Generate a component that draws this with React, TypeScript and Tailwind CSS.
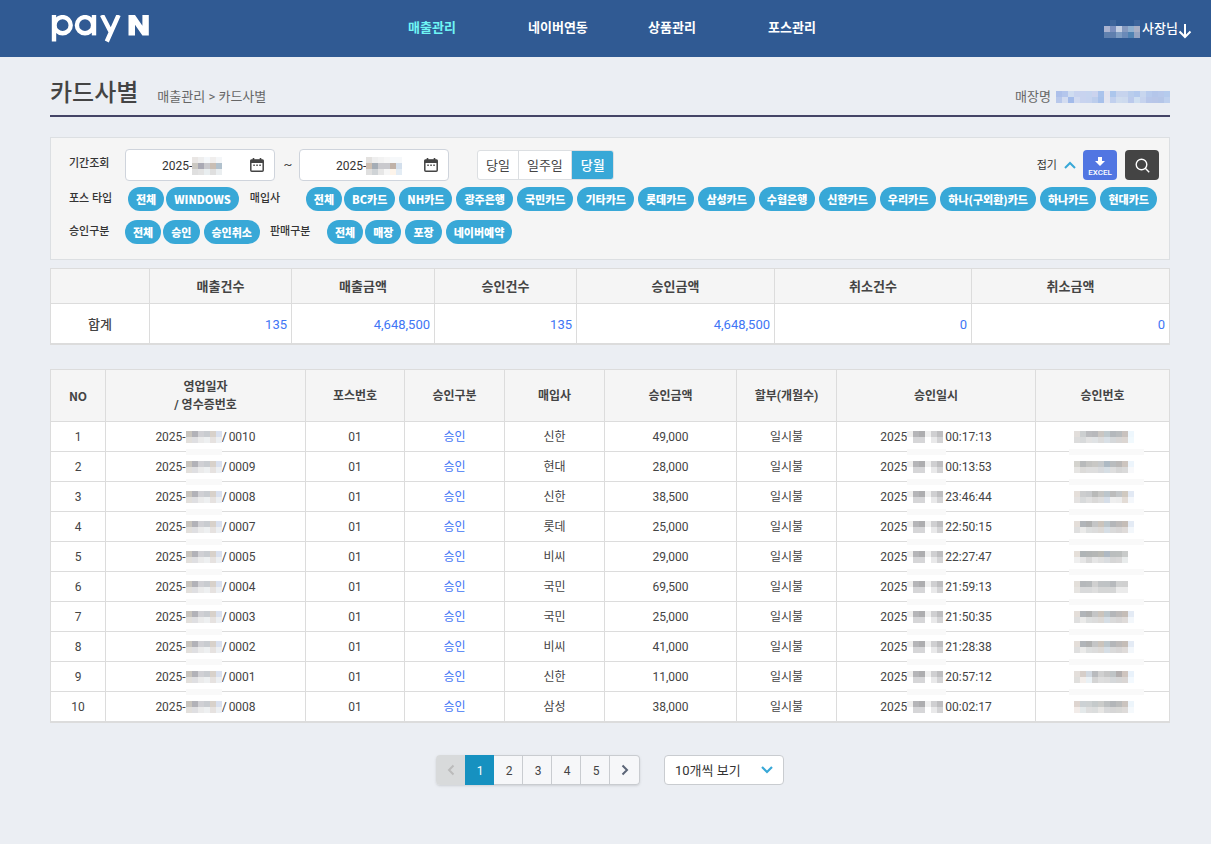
import { useState } from "react";
import type { ReactNode } from "react";

type Sale = {
  receipt: string;
  card: string;
  amount: string;
  time: string;
  tone: number;
};

const menus = ["매출관리", "네이버연동", "상품관리", "포스관리"];

const posTypes = ["전체", "WINDOWS"];
const cards = [
  "전체", "BC카드", "NH카드", "광주은행", "국민카드", "기타카드", "롯데카드",
  "삼성카드", "수협은행", "신한카드", "우리카드", "하나(구외환)카드", "하나카드", "현대카드",
];
const approvals = ["전체", "승인", "승인취소"];
const saleTypes = ["전체", "매장", "포장", "네이버예약"];

const summary = [
  { label: "매출건수", value: "135" },
  { label: "매출금액", value: "4,648,500" },
  { label: "승인건수", value: "135" },
  { label: "승인금액", value: "4,648,500" },
  { label: "취소건수", value: "0" },
  { label: "취소금액", value: "0" },
];

const sales: Sale[] = [
  { receipt: "0010", card: "신한", amount: "49,000", time: "00:17:13", tone: 0 },
  { receipt: "0009", card: "현대", amount: "28,000", time: "00:13:53", tone: 1 },
  { receipt: "0008", card: "신한", amount: "38,500", time: "23:46:44", tone: 2 },
  { receipt: "0007", card: "롯데", amount: "25,000", time: "22:50:15", tone: 3 },
  { receipt: "0005", card: "비씨", amount: "29,000", time: "22:27:47", tone: 4 },
  { receipt: "0004", card: "국민", amount: "69,500", time: "21:59:13", tone: 5 },
  { receipt: "0003", card: "국민", amount: "25,000", time: "21:50:35", tone: 3 },
  { receipt: "0002", card: "비씨", amount: "41,000", time: "21:28:38", tone: 3 },
  { receipt: "0001", card: "신한", amount: "11,000", time: "20:57:12", tone: 6 },
  { receipt: "0008", card: "삼성", amount: "38,000", time: "00:02:17", tone: 7 },
];

// masked values, one colour per 6px block
const userMask = [
  ["#305a93", "#3d659b", "#305a93", "#305a93", "#305a93", "#3b639a"],
  ["#a9b2cf", "#7b90bf", "#c4cfe3", "#8499bf", "#8fafcf", "#a9b0c6"],
  ["#5f80ae", "#5f7fae", "#7e9cc2", "#6a8ab8", "#4f82b2", "#93a3c2"],
];
const shopMask = [
  ["#adc0ea", "#b4c6ec", "#cfdcf0", "#c8d3ef", "#c8d3ef", "#c6d4ef", "#cbd3ee", "#aac3ec", "#e3e3ef", "#acc6ec", "#c6d3ed", "#c6d3ed", "#b9cdec", "#b3c9ed", "#c8d6ee", "#b8cbed", "#b4c6ea", "#b7c8eb", "#b5cbed"],
  ["#b8c8eb", "#d3dcf0", "#a3bbea", "#d1daf0", "#c8d3ef", "#c6d3ef", "#bccdec", "#a8c1eb", "#e3e5f0", "#c1d0ee", "#cfdcee", "#cddaee", "#bbcaec", "#cfdff1", "#c6d3ee", "#b8c7ea", "#b8c6e8", "#b5c6e8", "#bed0ee"],
];
const fromMask = [
  ["#e9e6e4", "#eeeeee", "#f4f7fa", "#f0eeed", "#f4f6f8"],
  ["#cbc8c2", "#a9a9b4", "#c9c9cd", "#c9beb4", "#b1c1cd"],
  ["#dfdfdf", "#e3e3e3", "#e9eef0", "#dfdfdf", "#eaeef0"],
];
const toMask = [
  ["#e3e1df", "#eeeeee", "#f2f2f2", "#f6f6f6", "#f6f8fa", "#f6f8fa"],
  ["#cdbfb2", "#a5adb6", "#c9c9cd", "#c9c9cd", "#c0b2a8", "#d3dfec"],
  ["#dfdfdf", "#cfd3d6", "#e6e6e6", "#f6f6f6", "#fdf4ea", "#e3ecf4"],
];
const dateMask = [
  ["#c9c5be", "#b2b2b8", "#d0d0d4", "#c9ccd0", "#d8d1ca", "#d9e0ee"],
  ["#e2dfdb", "#dfdfe2", "#ebebeb", "#eef0f1", "#e6e2e0", "#eceff2"],
];
const timeMask = [
  ["#f0efee", "#b5b5b8", "#adadaf", "#efefef", "#cfcfd1", "#bebec0"],
  ["#ffffff", "#d6d6d8", "#d6d6d8", "#ffffff", "#e9e9ea", "#d3d3d5"],
];
const numberMasks = [
  [
    ["#e2dedb", "#cccfd0", "#bbbcbf", "#b8b9bc", "#cac6c2", "#bfc9cd", "#b4b8bc", "#b9bcbe", "#c9c2be", "#eef7fd"],
    ["#dcdcdc", "#d8dadb", "#e3e3e3", "#e0e3e5", "#dcdcdc", "#d9e0e6", "#d5d8da", "#d8d6d5", "#dcd6d2", "#f1f9fd"],
  ],
  [
    ["#d4d3ce", "#b8babb", "#c4c4c2", "#c9c8c5", "#c6c9cb", "#aebac4", "#b9bcbe", "#bab8b7", "#cdc5bf", "#edf5fc"],
    ["#e6e5e3", "#dcdbd9", "#dedede", "#dedede", "#d8dadd", "#d6dee4", "#dedede", "#d6d6d6", "#dadada", "#f8f9fb"],
  ],
  [
    ["#e5dfda", "#cccdce", "#c8cacc", "#b9bab9", "#c6c6c4", "#bcc6cc", "#bcbcbc", "#c3c6c8", "#d0c9c0", "#e2e9f4"],
    ["#e4e2e1", "#d8dadb", "#e0e0e0", "#dad9d8", "#dedede", "#d6dee8", "#efefef", "#ededed", "#e3dcd6", "#f4f7fb"],
  ],
  [
    ["#e4ded9", "#b1b5b9", "#b0b1b1", "#c4c5c6", "#cbc4bc", "#bcc6cb", "#b4b6b9", "#bdbab9", "#c5bdb7", "#e4ebf5"],
    ["#dfdfdf", "#ebebea", "#dddfdf", "#dcdcdc", "#dcd9d6", "#d6dee5", "#dadada", "#d8d6d6", "#dfdbd9", "#f3f7fb"],
  ],
  [
    ["#e5dfd9", "#afb4b6", "#b2b5b5", "#b5b7b6", "#babab5", "#afb9c3", "#bbbebe", "#bcbfbe", "#c9cbca", "#ffffff"],
    ["#efefef", "#e6e6e6", "#d8d8d8", "#e6e6e6", "#e0e0e0", "#dadde0", "#d6d6d6", "#d9d8d8", "#e9ecec", "#ffffff"],
  ],
  [
    ["#e3dfda", "#b5b8bb", "#b7babc", "#d0d0d0", "#c0c3c5", "#bfc3c5", "#b7babd", "#d0d1d1", "#d0d0d0", "#ffffff"],
    ["#e6e4e1", "#d9dadb", "#d9dadb", "#dedede", "#d5d6d6", "#d5d6d6", "#d5d6d6", "#ebebeb", "#ebebeb", "#ffffff"],
  ],
  [
    ["#e4dfdb", "#d6cec9", "#d1d8e0", "#b9bbbe", "#d0d0d0", "#c6c6c6", "#bfc4c6", "#b2aeae", "#cfc5bf", "#e9f2fb"],
    ["#e0dfdd", "#f3eeeb", "#eaf1f5", "#d4d4d4", "#dedede", "#dcdcdc", "#d5d8da", "#d6d6d6", "#dad6d4", "#f3f9fe"],
  ],
  [
    ["#ded5d0", "#ccd1d4", "#cdd1d2", "#c5cacb", "#cbccca", "#bdc0c1", "#b3b6b9", "#bbbcbc", "#cbc4bf", "#edf5fb"],
    ["#f2ece9", "#e4e9ea", "#dedede", "#dbdddd", "#e7e6e4", "#d8d9da", "#d6d6d6", "#d8d8d6", "#dedbd9", "#f5f9fc"],
  ],
];

function Mask({ blocks }: { blocks: string[][] }) {
  const width = blocks[0].length * 6;
  const height = blocks.length * 6;
  return (
    <svg width={width} height={height} viewBox={`0 0 ${width} ${height}`} shapeRendering="crispEdges" className="shrink-0" aria-hidden="true">
      {blocks.map((row, y) =>
        row.map((color, x) => <rect key={`${x}-${y}`} x={x * 6} y={y * 6} width="6" height="6" fill={color} />)
      )}
    </svg>
  );
}

// mask inside a table row, with the light strip laid over the line below it
function CellMask({ blocks, strip }: { blocks: string[][]; strip: string | null }) {
  return (
    <span className="relative shrink-0">
      <Mask blocks={blocks} />
      {strip && <span className={`absolute top-[18px] z-10 h-1.5 bg-[#f9f9f9] ${strip}`} />}
    </span>
  );
}

function Logo() {
  return (
    <svg width="98" height="28" viewBox="0 0 98 28" fill="none" stroke="white" strokeWidth="4.4" aria-hidden="true">
      <path d="M3 0V26.5" />
      <circle cx="11.6" cy="10.2" r="8.1" />
      <circle cx="34" cy="10.2" r="8.1" />
      <path d="M43 0V20.4" />
      <path d="M51 0L60 17.5M67.6 0L55.8 26.5" />
      <path d="M77.5 20.4V0H84L91.4 10.8V0H97.8V20.4H91.4L84 9.8V20.4Z" fill="white" stroke="none" />
    </svg>
  );
}

function CalendarIcon() {
  return (
    <svg width="14" height="14" viewBox="0 0 14 14" fill="none" aria-hidden="true">
      <path d="M3.5 0V3M10.5 0V3" stroke="#444" strokeWidth="1.6" />
      <rect x="0.8" y="2" width="12.4" height="11.2" rx="1" stroke="#444" strokeWidth="1.5" />
      <path d="M0.5 1.8H13.5V5H0.5Z" fill="#444" />
      <path d="M3.3 7.2H4.8M6.3 7.2H7.8M9.3 7.2H10.8" stroke="#444" strokeWidth="1.4" />
    </svg>
  );
}

function DateField({ label, mask }: { label: string; mask: string[][] }) {
  return (
    <div className="relative">
      <input
        type="text"
        aria-label={label}
        defaultValue="2025-"
        className="block h-8 w-[150px] rounded border border-[#cfd4dc] bg-white pl-9 pt-0.5 text-[12px] text-[#333]"
      />
      <span className="pointer-events-none absolute left-[67px] top-2"><Mask blocks={mask} /></span>
      <button type="button" aria-label={`${label} 달력`} className="absolute right-[11px] top-[9px]"><CalendarIcon /></button>
    </div>
  );
}

function Pills({ items }: { items: string[] }) {
  const [off, setOff] = useState<string[]>([]);
  const toggle = (item: string) => {
    setOff(off.includes(item) ? off.filter((o) => o !== item) : [...off, item]);
  };

  return (
    <div className="flex flex-wrap font-['Noto_Sans_CJK_KR',sans-serif]">
      {items.map((item) => (
        <button
          key={item}
          type="button"
          aria-pressed={!off.includes(item)}
          onClick={() => toggle(item)}
          className={`mr-1 h-6 rounded-full px-2 text-[11px] font-black leading-[22px] text-white first:mr-0.5 last:mr-0 ${off.includes(item) ? "bg-gray-400" : "bg-[#38a8d7]"}`}
        >
          {item}
        </button>
      ))}
    </div>
  );
}

function FilterLabel({ children }: { children: ReactNode }) {
  return <span className="block shrink-0 text-[11px] font-medium leading-4 text-[#333]">{children}</span>;
}

function Header() {
  return (
    <header className="flex h-[57px] items-center bg-[#305a93] pl-[51px] pr-[19px] text-[13px] text-white">
      <a href="#" aria-label="pay N" className="w-[357px] shrink-0"><Logo /></a>
      <nav className="flex grow pb-0.5">
        {menus.map((menu, i) => (
          <a key={menu} href="#" className={`w-[120px] font-bold ${i === 0 ? "text-[#6ff5f5]" : ""}`}>{menu}</a>
        ))}
      </nav>
      <button type="button" className="flex items-center">
        <Mask blocks={userMask} />
        <span className="ml-0.5 pt-px font-medium">사장님</span>
        <svg width="14" height="16" viewBox="0 0 14 16" fill="none" stroke="white" strokeWidth="2" className="mt-1" aria-hidden="true">
          <path d="M7 1V14M1.5 8.5L7 14L12.5 8.5" />
        </svg>
      </button>
    </header>
  );
}

function Filters() {
  const [range, setRange] = useState("당월");

  return (
    <section className="mt-5 border border-[#dcdfe2] bg-[#f5f5f5] pb-[15px] pl-[18px] pr-[10px] pt-[11px]">
      <div className="flex items-center">
        <div className="w-14 pb-0.5"><FilterLabel>기간조회</FilterLabel></div>
        <DateField label="시작일" mask={fromMask} />
        <span className="w-6 pl-0.5 text-center text-[13px]">~</span>
        <DateField label="종료일" mask={toMask} />
        <div className="ml-7 flex h-[30px] overflow-hidden rounded-[3px] border border-[#dcdfe2] bg-white">
          {["당일", "일주일", "당월"].map((name) => (
            <button
              key={name}
              type="button"
              onClick={() => setRange(name)}
              className={`-my-px border-r border-[#dcdfe2] px-2 pt-px text-[13px] last:-mr-px last:border-0 last:px-[9px] ${range === name ? "bg-[#38a8d7] font-medium text-white" : "text-[#444]"}`}
            >
              {name}
            </button>
          ))}
        </div>
        <div className="ml-auto flex items-center">
          <button type="button" className="flex items-center gap-[7px] text-[11px] text-[#333]">
            <span className="pt-0.5">접기</span>
            <svg width="12" height="8" viewBox="0 0 12 8" fill="none" stroke="#38a8d7" strokeWidth="2" aria-hidden="true"><path d="M1 7L6 2L11 7" /></svg>
          </button>
          <button type="button" className="ml-[7px] flex h-[30px] w-[34px] flex-col items-center rounded-sm bg-[#5176e2] pt-[7px] text-white">
            <svg width="10" height="9" viewBox="0 0 10 9" fill="white" aria-hidden="true"><path d="M3 0H7V4H10L5 9L0 4H3Z" /></svg>
            <span className="mt-[3px] text-[8px] font-medium leading-[8px]">EXCEL</span>
          </button>
          <button type="button" aria-label="검색" className="ml-2 flex h-[30px] w-[34px] items-center justify-center rounded-sm bg-[#444]">
            <svg width="15" height="15" viewBox="0 0 15 15" fill="none" stroke="white" strokeWidth="1.4" aria-hidden="true">
              <circle cx="6.5" cy="6.5" r="5.3" />
              <path d="M10.3 10.3L14.2 14.2" />
            </svg>
          </button>
        </div>
      </div>
      <div className="mt-[6px] flex items-center">
        <div className="w-[59px] shrink-0"><FilterLabel>포스 타입</FilterLabel></div>
        <Pills items={posTypes} />
        <div className="ml-[11px] w-14 shrink-0"><FilterLabel>매입사</FilterLabel></div>
        <Pills items={cards} />
      </div>
      <div className="mt-[9px] flex items-center">
        <div className="w-14 shrink-0"><FilterLabel>승인구분</FilterLabel></div>
        <Pills items={approvals} />
        <div className="ml-[10px] w-[57px] shrink-0"><FilterLabel>판매구분</FilterLabel></div>
        <Pills items={saleTypes} />
      </div>
    </section>
  );
}

function Summary() {
  return (
    <table className="mt-2 w-full table-fixed border-collapse border border-b-2 border-[#dcdcdc] bg-white text-[13px]">
      <colgroup>
        <col className="w-[99px]" />
        <col className="w-[142px]" />
        <col className="w-[143px]" />
        <col className="w-[142px]" />
        <col className="w-[198px]" />
        <col className="w-[197px]" />
        <col className="w-[198px]" />
      </colgroup>
      <thead className="bg-[#f5f5f5]">
        <tr className="h-[35px]">
          <td className="border border-[#dcdcdc]" />
          {summary.map((s) => <th key={s.label} className="border border-[#dcdcdc] pt-0.5 font-bold">{s.label}</th>)}
        </tr>
      </thead>
      <tbody>
        <tr className="h-10">
          <th className="border border-[#dcdcdc] pt-0.5 font-medium">합계</th>
          {summary.map((s) => (
            <td key={s.label} className="border border-[#dcdcdc] pr-1 pt-0.5 text-right text-[#4176f5]">{s.value}</td>
          ))}
        </tr>
      </tbody>
    </table>
  );
}

function SalesTable() {
  const cell = "border border-[#dcdcdc] pt-0.5";
  return (
    <table className="mt-6 w-full table-fixed border-collapse border border-b-2 border-[#dcdcdc] bg-white text-center text-[12px] leading-[18px]">
      <colgroup>
        <col className="w-[55px]" />
        <col className="w-[200px]" />
        <col className="w-[99px]" />
        <col className="w-[100px]" />
        <col className="w-[100px]" />
        <col className="w-[132px]" />
        <col className="w-[100px]" />
        <col className="w-[199px]" />
        <col className="w-[134px]" />
      </colgroup>
      <thead className="bg-[#f5f5f5]">
        <tr className="h-[52px]">
          <th className={`${cell} font-['Noto_Sans_CJK_KR',sans-serif]`}>NO</th>
          <th className={cell}>영업일자<br />/ 영수증번호</th>
          <th className={cell}>포스번호</th>
          <th className={cell}>승인구분</th>
          <th className={cell}>매입사</th>
          <th className={cell}>승인금액</th>
          <th className={cell}>할부(개월수)</th>
          <th className={cell}>승인일시</th>
          <th className={cell}>승인번호</th>
        </tr>
      </thead>
      <tbody>
        {sales.map((sale, i) => {
          const last = i === sales.length - 1;
          return (
            <tr key={i} className="h-[30px] last:h-[31px]">
              <td className={cell}>{i + 1}</td>
              <td className={cell}>
                <div className="flex items-center justify-center">
                  2025-<CellMask blocks={dateMask} strip={last ? null : "inset-x-0"} />/<span className="ml-0.5">{sale.receipt}</span>
                </div>
              </td>
              <td className={cell}>01</td>
              <td className={cell}><a href="#" className="text-[#4176f5]">승인</a></td>
              <td className={cell}>{sale.card}</td>
              <td className={cell}>{sale.amount}</td>
              <td className={cell}>일시불</td>
              <td className={cell}>
                <div className="flex items-center justify-center">
                  2025<CellMask blocks={timeMask} strip={last ? null : "left-0 -right-[3px]"} /><span className="ml-0.5">{sale.time}</span>
                </div>
              </td>
              <td className={cell}>
                <div className="flex items-center justify-center pl-0.5">
                  <CellMask blocks={numberMasks[sale.tone]} strip={last ? null : "-left-[5px] -right-[10px]"} />
                </div>
              </td>
            </tr>
          );
        })}
      </tbody>
    </table>
  );
}

function Paging() {
  const [page, setPage] = useState(1);
  return (
    <div className="mt-8 flex justify-center gap-6 pb-14">
      <nav aria-label="페이지" className="flex h-[30px] rounded-sm bg-[#f6f7f9] text-[12px] shadow-sm">
        <button type="button" aria-label="이전" disabled className="flex w-[29px] items-center justify-center rounded-l-sm bg-[#d8dadb]">
          <svg width="8" height="12" viewBox="0 0 8 12" fill="none" stroke="#bbb" strokeWidth="2" aria-hidden="true"><path d="M6.5 1.5L2 6L6.5 10.5" /></svg>
        </button>
        {[1, 2, 3, 4, 5].map((n) => (
          <button
            key={n}
            type="button"
            onClick={() => setPage(n)}
            className={`w-[29px] border-y border-r pl-0.5 pt-0.5 ${page === n ? "border-[#1691c0] bg-[#1691c0] text-white" : "border-[#c9ccd0] text-[#444]"}`}
          >
            {n}
          </button>
        ))}
        <button type="button" aria-label="다음" className="flex w-[30px] items-center justify-center rounded-r-sm border-y border-r border-[#c9ccd0]">
          <svg width="8" height="12" viewBox="0 0 8 12" fill="none" stroke="#5b6577" strokeWidth="2" aria-hidden="true"><path d="M1.5 1.5L6 6L1.5 10.5" /></svg>
        </button>
      </nav>
      <div className="relative">
        <select aria-label="페이지당 개수" className="h-[30px] w-[120px] appearance-none rounded border border-[#c9ccd0] bg-white pl-[10px] pt-px text-[13px] text-[#333]">
          <option>10개씩 보기</option>
          <option>20개씩 보기</option>
          <option>50개씩 보기</option>
        </select>
        <svg width="12" height="8" viewBox="0 0 12 8" fill="none" stroke="#38a8d7" strokeWidth="2.2" className="pointer-events-none absolute right-[11px] top-[11px]" aria-hidden="true">
          <path d="M1 1L6 6L11 1" />
        </svg>
      </div>
    </div>
  );
}

export default function App() {
  return (
    <div className="min-h-screen bg-[#ebeef3] font-[Roboto,'Noto_Sans_CJK_KR',sans-serif] text-[#444]">
      <Header />
      <main className="pl-[50px] pr-[41px]">
        <div className="flex h-[60px] items-end border-b-2 border-[#444466] pb-2 text-[13px] text-[#666]">
          <h1 className="text-[24px] font-medium leading-7 text-[#444]">카드사별</h1>
          <p className="ml-[19px] leading-5">매출관리 &gt; 카드사별</p>
          <p className="ml-auto flex items-center leading-5"><span className="mr-[5px]">매장명</span><Mask blocks={shopMask} /></p>
        </div>
        <Filters />
        <Summary />
        <SalesTable />
        <Paging />
      </main>
    </div>
  );
}
